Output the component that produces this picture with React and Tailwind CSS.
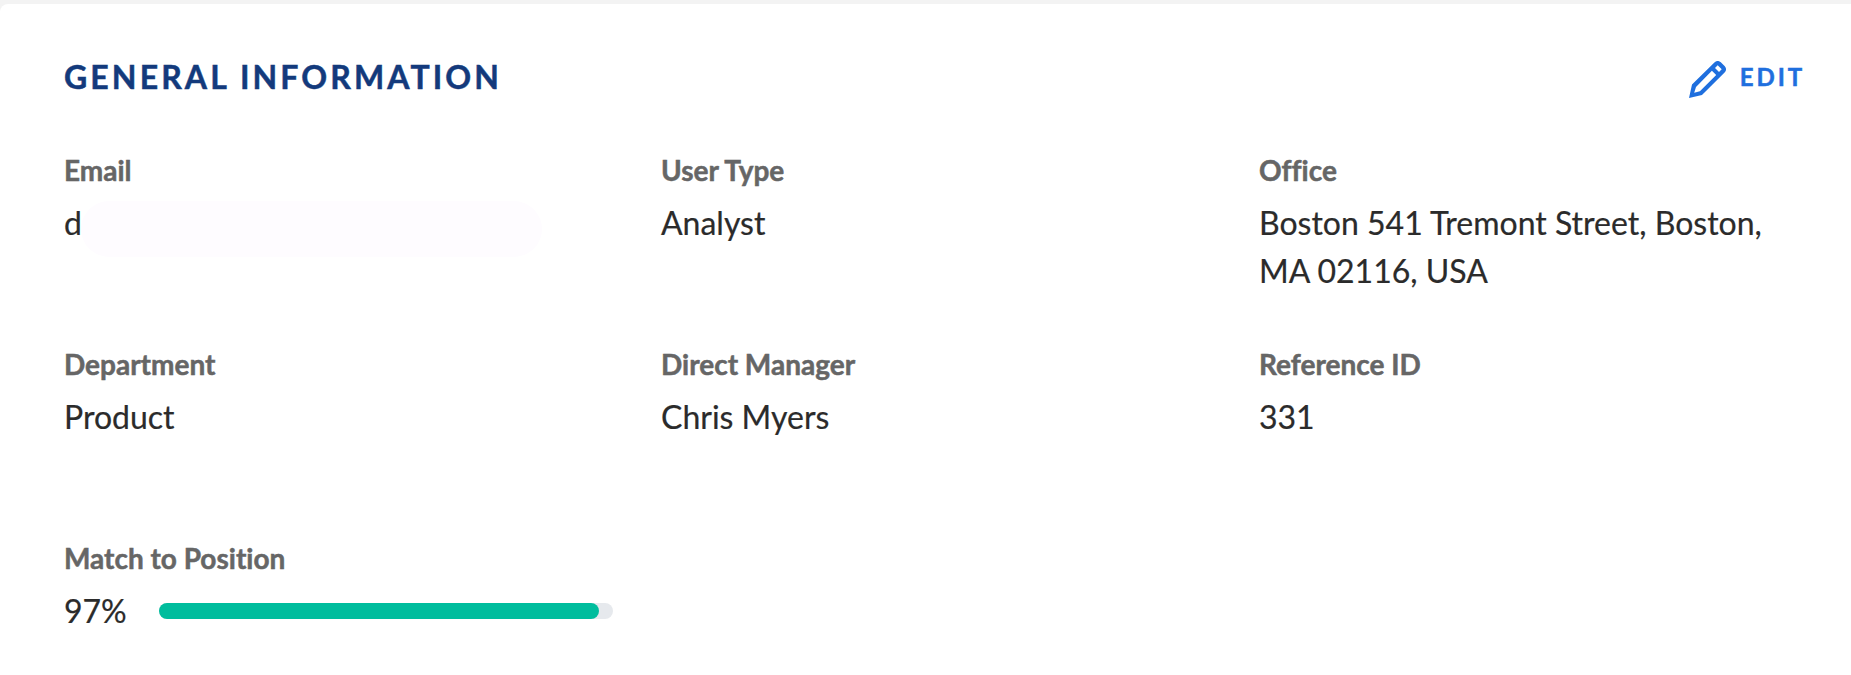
const fields = [
  { label: "Email", value: "d", masked: true },
  { label: "User Type", value: "Analyst" },
  { label: "Office", value: "Boston 541 Tremont Street, Boston, MA 02116, USA" },
  { label: "Department", value: "Product" },
  { label: "Direct Manager", value: "Chris Myers" },
  { label: "Reference ID", value: "331" },
  { label: "Match to Position", value: "97%", progress: 97 }
];

function PencilIcon() {
  return (
    <svg className="mt-[5px] size-[37px]" viewBox="0 0 37 37" fill="currentColor">
      <path
        fillRule="evenodd"
        d="M0 37L3 23.6L25.4 1.4Q28.6-1.4 31.8 1.2L35.8 5.2Q38.4 8.4 35.6 11.6L13 34ZM7 26L5.2 31.8L10.9 30.2L27.2 14L22.9 9.7ZM26 7L30 11L32.7 8.3L28.7 4.3Z"
      />
    </svg>
  );
}

function Field({ label, value, masked, progress }) {
  return (
    <div className="w-[549px]">
      <p className="text-[28px] leading-[40px] font-bold text-[#666666] [font-variant-ligatures:none] [-webkit-text-stroke:0.5px]">
        {label}
      </p>
      <div className="mt-[9px] flex">
        <p className="text-[32px] leading-[48px] text-[#2b2b2b] [-webkit-text-stroke:0.2px]">{value}</p>
        {masked && (
          <div className="mt-[2px] -ml-px h-[56px] w-[461px] rounded-full bg-[#fefcff]" />
        )}
        {progress && (
          <div className="mt-4 ml-8 h-4 w-[454px] rounded-full bg-[#e6e9ed]">
            <div
              className="h-4 rounded-full bg-[#00bd9d]"
              style={{ width: `${progress}%` }}
            />
          </div>
        )}
      </div>
    </div>
  );
}

export default function App() {
  return (
    <div className="h-[675px] w-[1851px] bg-[#f3f3f3] pt-1 font-['Lato',sans-serif]">
      <div className="h-full overflow-hidden rounded-tl-lg bg-white px-16 pt-[49px]">

        {/* Header */}
        <div className="flex h-12 items-center justify-between">
          <h1 className="-mt-px text-[32px] font-bold tracking-[3.12px] text-[#133a7c] [-webkit-text-stroke:0.5px]">
            GENERAL INFORMATION
          </h1>
          <button className="-mr-[18px] flex items-center gap-[14px] text-[24px] font-bold tracking-[2.9px] text-[#1f6fde] [-webkit-text-stroke:0.5px]">
            <PencilIcon />
            EDIT
          </button>
        </div>

        {/* Fields */}
        <div className="mt-[49px] grid grid-cols-[597px_598px_549px] auto-rows-[194px]">
          {fields.map((field) => (
            <Field key={field.label} {...field} />
          ))}
        </div>

      </div>
    </div>
  );
}
